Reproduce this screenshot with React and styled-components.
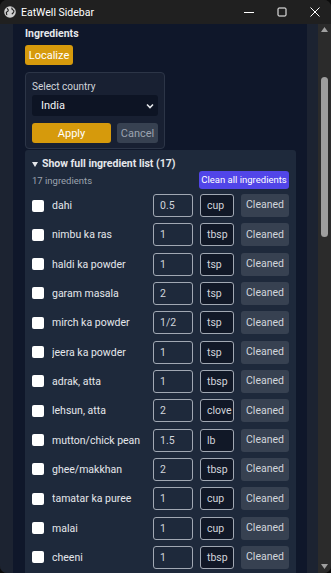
import styled, { createGlobalStyle } from "styled-components";

const GlobalStyle = createGlobalStyle`
  html, body {
    margin: 0;
    padding: 0;
    background: #0b0b0b;
  }
  * {
    box-sizing: border-box;
  }
`;

const Frame = styled.div`
  width: 331px;
  height: 573px;
  display: flex;
  flex-direction: column;
  overflow: hidden;
  border-radius: 7px;
  background: #202020;
  font-family: Roboto, "Noto Sans", sans-serif;
`;

const TitleBar = styled.div`
  height: 24px;
  flex-shrink: 0;
  display: flex;
  align-items: center;
  padding-left: 4px;
  background: #202020;
  color: #ffffff;
`;

const TitleText = styled.span`
  margin-left: 5px;
  font-size: 10.5px;
  flex: 1;
`;

const WinButton = styled.div`
  width: 33px;
  height: 24px;
  display: flex;
  align-items: center;
  justify-content: center;
`;

const Body = styled.div`
  flex: 1;
  min-height: 0;
  display: flex;
`;

const Page = styled.div`
  flex: 1;
  min-width: 0;
  background: #1c2331;
  padding: 0 11px 0 13px;
  overflow: hidden;
`;

const Main = styled.div`
  background: #0f172a;
  min-height: 100%;
  padding: 3px 11px 0 12px;
`;

const Heading = styled.div`
  font-size: 10.5px;
  font-weight: 700;
  line-height: 14px;
  color: #e5e7eb;
`;

const Button = styled.button`
  height: ${(p) => p.$h || 20}px;
  width: ${(p) => (p.$w ? p.$w + "px" : "auto")};
  padding: 0;
  border: none;
  border-radius: 3px;
  background: ${(p) => p.$bg};
  color: ${(p) => p.$color || "#ffffff"};
  font-family: inherit;
  font-size: ${(p) => p.$size || 11}px;
  line-height: 1;
  white-space: nowrap;
`;

const LocalizeButton = styled(Button)`
  margin-top: 4px;
`;

const CountryBox = styled.div`
  width: 140px;
  margin-top: 7px;
  padding: 7px 6px 5px;
  background: #182032;
  border: 1px solid #2c3547;
  border-radius: 4px;
`;

const Label = styled.div`
  font-size: 10px;
  line-height: 13px;
  color: #d1d5db;
`;

const Select = styled.div`
  margin-top: 2px;
  height: 21px;
  display: flex;
  align-items: center;
  justify-content: space-between;
  padding: 0 4px 0 9px;
  background: #0d1424;
  border-radius: 3px;
  color: #f3f4f6;
  font-size: 11px;
`;

const ButtonRow = styled.div`
  display: flex;
  gap: 6px;
  margin-top: 7px;
`;

const Card = styled.div`
  margin-top: 1px;
  padding: 7px 7px 0;
  background: #1e293b;
  border-radius: 3px;
`;

const Summary = styled.div`
  display: flex;
  align-items: center;
  gap: 4px;
  font-size: 10.5px;
  font-weight: 700;
  line-height: 14px;
  color: #e5e7eb;
`;

const Meta = styled.div`
  height: 18px;
  display: flex;
  align-items: center;
  justify-content: space-between;
`;

const Count = styled.span`
  font-size: 9.5px;
  color: #9ca3af;
`;

const List = styled.div`
  margin-top: 5px;
  display: flex;
  flex-direction: column;
  gap: 6.33px;
`;

const Row = styled.div`
  height: 23px;
  display: flex;
  align-items: center;
  gap: 7px;
`;

const Check = styled.span`
  width: 12px;
  height: 12px;
  margin-right: 1px;
  flex-shrink: 0;
  background: #ffffff;
  border-radius: 2px;
`;

const Name = styled.span`
  flex: 1;
  min-width: 0;
  font-size: 10.5px;
  color: #e5e7eb;
  white-space: nowrap;
  overflow: hidden;
`;

const Field = styled.div`
  width: ${(p) => p.$w}px;
  height: 23px;
  flex-shrink: 0;
  display: flex;
  align-items: center;
  padding: 0 6px;
  background: ${(p) => p.$bg};
  border: 1px solid #a1a8b3;
  border-radius: 3px;
  color: #d1d5db;
  font-size: 10.5px;
  white-space: nowrap;
  overflow: hidden;
`;

const Scrollbar = styled.div`
  width: 13px;
  flex-shrink: 0;
  background: #2b2b2b;
  display: flex;
  flex-direction: column;
  align-items: center;
  padding: 3px 0 4px;
`;

const Thumb = styled.div`
  width: 7px;
  height: 160px;
  margin-top: 45px;
  border-radius: 4px;
  background: #9e9e9e;
`;

const Spacer = styled.div`
  flex: 1;
`;

const ingredients = [
  ["dahi", "0.5", "cup"],
  ["nimbu ka ras", "1", "tbsp"],
  ["haldi ka powder", "1", "tsp"],
  ["garam masala", "2", "tsp"],
  ["mirch ka powder", "1/2", "tsp"],
  ["jeera ka powder", "1", "tsp"],
  ["adrak, atta", "1", "tbsp"],
  ["lehsun, atta", "2", "clove"],
  ["mutton/chick pean", "1.5", "lb"],
  ["ghee/makkhan", "2", "tbsp"],
  ["tamatar ka puree", "1", "cup"],
  ["malai", "1", "cup"],
  ["cheeni", "1", "tbsp"],
  ["namak", "1", "tsp"],
  ["pyaaz", "2", "pcs"],
  ["dhaniya patta", "1", "tbsp"],
  ["pani", "1", "cup"],
];

function Globe() {
  return (
    <svg width="12" height="12" viewBox="0 0 12 12">
      <circle cx="6" cy="6" r="5.8" fill="#cfcfcf" />
      <path
        d="M3 2.2c1 .8 1.6 1.6 1.2 2.6-.4.8-1.6.7-1.8 1.7-.2.8.5 1.6.3 2.6M8.2 1.6c-.6.9-.3 1.7.6 2.1.9.4 1.4 1.2 1 2.2-.4 1-1.4 1.2-1.8 2.4"
        stroke="#202020"
        strokeWidth="1.2"
        fill="none"
      />
    </svg>
  );
}

function Arrow({ down }) {
  return (
    <svg width="7" height="5" viewBox="0 0 7 5">
      <path d={down ? "M0 0h7L3.5 5z" : "M0 5h7L3.5 0z"} fill="#a0a0a0" />
    </svg>
  );
}

export default function App() {
  return (
    <>
      <GlobalStyle />
      <Frame>
        <TitleBar>
          <Globe />
          <TitleText>EatWell Sidebar</TitleText>
          <WinButton>
            <svg width="10" height="10" viewBox="0 0 10 10">
              <path d="M0 5.5h10" stroke="#fff" strokeWidth="1" />
            </svg>
          </WinButton>
          <WinButton>
            <svg width="10" height="10" viewBox="0 0 10 10">
              <rect x="1" y="1" width="8" height="8" rx="1" stroke="#fff" fill="none" />
            </svg>
          </WinButton>
          <WinButton>
            <svg width="10" height="10" viewBox="0 0 10 10">
              <path d="M.5.5l9 9M9.5.5l-9 9" stroke="#fff" strokeWidth="1" />
            </svg>
          </WinButton>
        </TitleBar>
        <Body>
          <Page>
            <Main>
              <Heading>Ingredients</Heading>
              <LocalizeButton $bg="#d69a0c" $w={48}>
                Localize
              </LocalizeButton>
              <CountryBox>
                <Label>Select country</Label>
                <Select>
                  India
                  <svg width="8" height="6" viewBox="0 0 8 6">
                    <path d="M1 1.5l3 3 3-3" stroke="#e5e7eb" strokeWidth="1.6" fill="none" />
                  </svg>
                </Select>
                <ButtonRow>
                  <Button $bg="#d69a0c" $w={79}>
                    Apply
                  </Button>
                  <Button $bg="#374151" $color="#9ca3af" $w={41}>
                    Cancel
                  </Button>
                </ButtonRow>
              </CountryBox>
              <Card>
                <Summary>
                  <svg width="6" height="5" viewBox="0 0 6 5">
                    <path d="M0 0h6L3 5z" fill="#e5e7eb" />
                  </svg>
                  Show full ingredient list (17)
                </Summary>
                <Meta>
                  <Count>17 ingredients</Count>
                  <Button $bg="#5145e8" $h={18} $size={9.5} $w={90}>
                    Clean all ingredients
                  </Button>
                </Meta>
                <List>
                  {ingredients.map(([name, qty, unit]) => (
                    <Row key={name}>
                      <Check />
                      <Name>{name}</Name>
                      <Field $w={40} $bg="#1e293b">
                        {qty}
                      </Field>
                      <Field $w={34} $bg="#111827">
                        {unit}
                      </Field>
                      <Button $bg="#374151" $color="#d1d5db" $h={23} $w={48} $size={10.5}>
                        Cleaned
                      </Button>
                    </Row>
                  ))}
                </List>
              </Card>
            </Main>
          </Page>
          <Scrollbar>
            <Arrow />
            <Thumb />
            <Spacer />
            <Arrow down />
          </Scrollbar>
        </Body>
      </Frame>
    </>
  );
}
